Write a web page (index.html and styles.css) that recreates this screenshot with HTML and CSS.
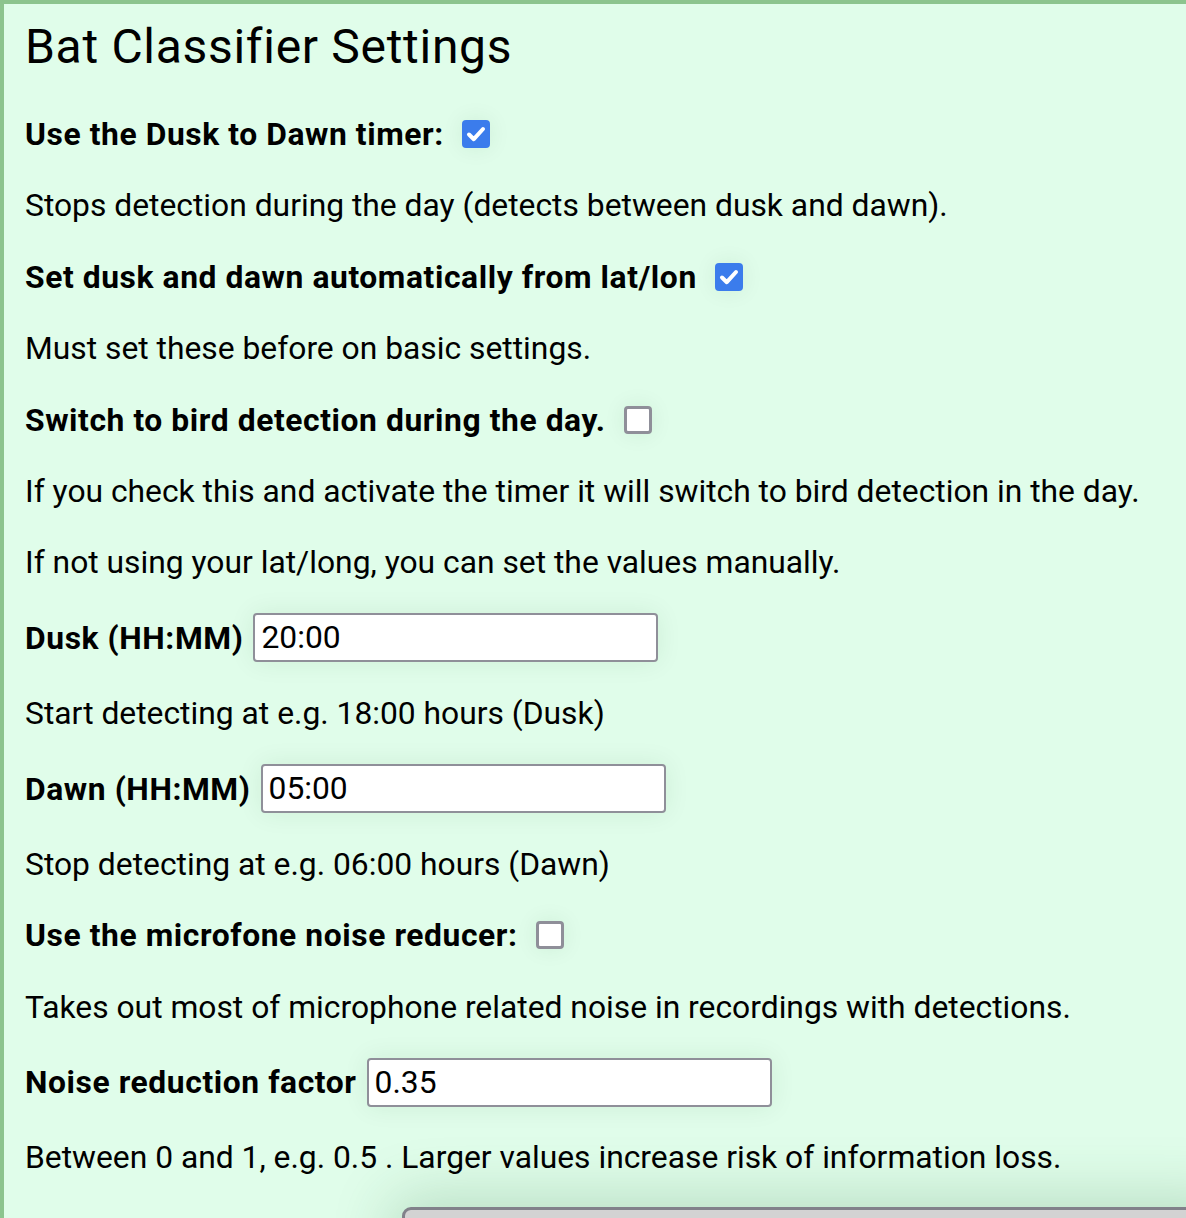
FILE: index.html
```html
<!DOCTYPE html>
<html>
<head>
<meta charset="utf-8">
<link rel="stylesheet" href="styles.css">
</head>
<body>
<div class="panel">
  <h1 class="title">Bat Classifier Settings</h1>
  <div class="rows">
    <div class="line bold">Use the Dusk to Dawn timer: <span class="cb checked"><svg viewBox="0 0 28 28" width="28" height="28"><path d="M7 14.5 L11.8 19.2 L21 9" fill="none" stroke="#fff" stroke-width="4" stroke-linecap="round" stroke-linejoin="round"/></svg></span></div>
    <div class="line">Stops detection during the day (detects between dusk and dawn).</div>
    <div class="line bold">Set dusk and dawn automatically from lat/lon <span class="cb checked"><svg viewBox="0 0 28 28" width="28" height="28"><path d="M7 14.5 L11.8 19.2 L21 9" fill="none" stroke="#fff" stroke-width="4" stroke-linecap="round" stroke-linejoin="round"/></svg></span></div>
    <div class="line">Must set these before on basic settings.</div>
    <div class="line bold">Switch to bird detection during the day. <span class="cb"></span></div>
    <div class="line">If you check this and activate the timer it will switch to bird detection in the day.</div>
    <div class="line">If not using your lat/long, you can set the values manually.</div>
    <div class="field"><span class="bold">Dusk (HH:MM)</span><span class="input">20:00</span></div>
    <div class="line">Start detecting at e.g. 18:00 hours (Dusk)</div>
    <div class="field"><span class="bold">Dawn (HH:MM)</span><span class="input">05:00</span></div>
    <div class="line">Stop detecting at e.g. 06:00 hours (Dawn)</div>
    <div class="line bold">Use the microfone noise reducer: <span class="cb"></span></div>
    <div class="line">Takes out most of microphone related noise in recordings with detections.</div>
    <div class="field"><span class="bold">Noise reduction factor</span><span class="input">0.35</span></div>
    <div class="line">Between 0 and 1, e.g. 0.5 . Larger values increase risk of information loss.</div>
  </div>
  <div class="footer"><div class="button"></div></div>
</div>
</body>
</html>
```
FILE: styles.css
```css
html, body {
  margin: 0;
  padding: 0;
  height: 100%;
  overflow: hidden;
}
body {
  background: #e0fdea;
  font-family: Roboto, "Liberation Sans", sans-serif;
  color: #000;
}
.panel {
  border-top: 4px solid #8cc48e;
  border-left: 4px solid #8cc48e;
  background: #e0fdea;
  padding-left: 21px;
  min-height: 1300px;
  box-sizing: border-box;
}
.title {
  font-size: 48px;
  letter-spacing: 0.7px;
  font-weight: 400;
  margin: 0;
  line-height: 54px;
  padding-top: 16px;
}
.rows {
  display: flex;
  flex-direction: column;
  gap: 29.4px;
  margin-top: 39px;
  font-size: 31.8px;
}
.line {
  line-height: 42px;
  height: 42px;
  white-space: nowrap;
}
.bold {
  font-weight: 700;
  letter-spacing: 0.58px;
}
.cb {
  display: inline-block;
  width: 28px;
  height: 28px;
  box-sizing: border-box;
  border: 3px solid #8f8f99;
  border-radius: 4px;
  background: #fff;
  vertical-align: -3px;
  margin-left: 10px;
  box-shadow: 0 0 22px rgba(0, 60, 20, 0.08);
}
.cb.checked {
  background: #3b7cec;
  border: none;
}
.cb svg {
  display: block;
}
.field {
  display: flex;
  align-items: center;
  height: 50px;
  white-space: nowrap;
}
.input {
  display: inline-block;
  box-sizing: border-box;
  width: 405px;
  height: 49px;
  line-height: 45px;
  margin-left: 10px;
  border: 2px solid #8f8f99;
  border-radius: 4px;
  background: #fff;
  padding: 0 6px;
  font-weight: 400;
  letter-spacing: 0;
  box-shadow: 0 0 26px rgba(0, 60, 20, 0.08);
}
.footer {
  margin-top: 29px;
  padding-left: 377px;
}
.button {
  height: 60px;
  margin-right: -40px;
  background: #d3d3d3;
  border: 3px solid #81818a;
  border-radius: 9px;
  box-shadow: 0 0 60px 10px rgba(40, 110, 60, 0.22);
}
```
